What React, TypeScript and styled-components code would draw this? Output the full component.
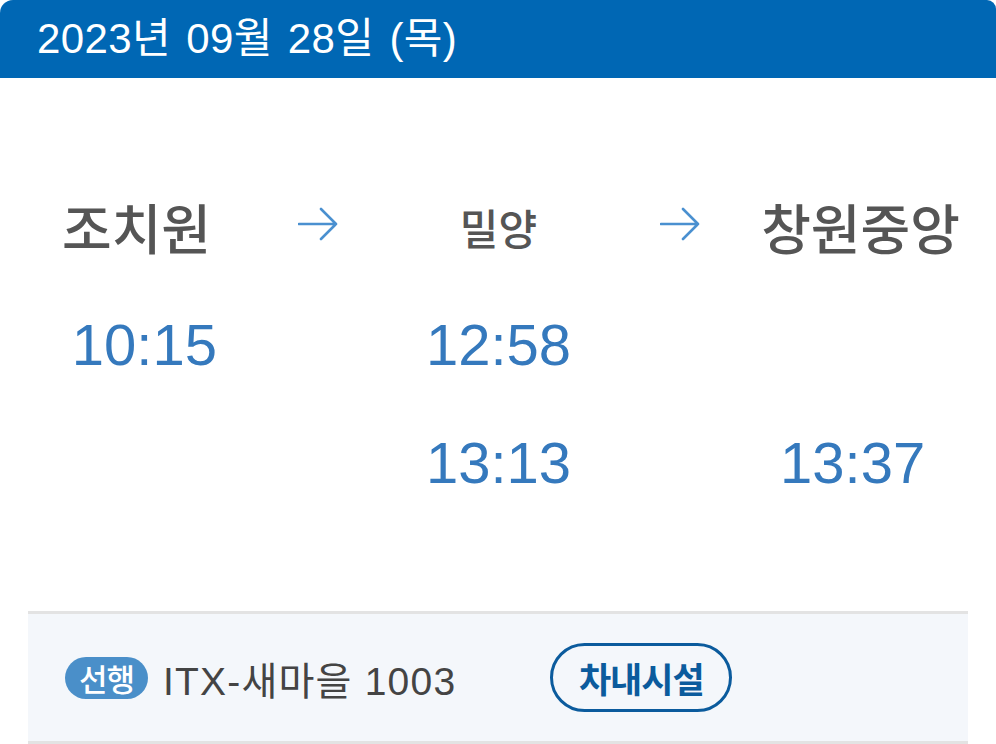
import React from 'react'
import styled, { createGlobalStyle } from 'styled-components'

const GlobalStyle = createGlobalStyle`
  html, body {
    margin: 0;
    padding: 0;
    background: #ffffff;
  }
  body {
    font-family: 'Liberation Sans', 'Noto Sans CJK KR', sans-serif;
  }
`

const Page = styled.div`
  width: 996px;
  height: 744px;
  overflow: hidden;
  background: #ffffff;
`

const DateBar = styled.div`
  height: 78px;
  display: flex;
  align-items: center;
  padding-left: 37px;
  background: #0067b4;
  border-radius: 13px 9px 0 0;
  color: #ffffff;
  font-size: 42px;
  line-height: 1;
  letter-spacing: 0.4px;
  word-spacing: 3px;
`

const Route = styled.div`
  display: grid;
  grid-template-columns: repeat(5, 181px);
  grid-auto-rows: 80px;
  row-gap: 38px;
  padding: 108px 0 0 46px;
  margin-bottom: 109px;
`

const Station = styled.div<{ small?: boolean }>`
  display: flex;
  align-items: center;
  justify-content: center;
  white-space: nowrap;
  font-family: 'Noto Sans CJK KR', 'Liberation Sans', sans-serif;
  font-size: ${({ small }) => (small ? '42px' : '54px')};
  font-weight: 500;
  color: #555555;
`

const ArrowCell = styled.div`
  display: flex;
  align-items: center;
  justify-content: center;
  padding-bottom: 4px;
`

const Time = styled.div<{ align: 'left' | 'center' | 'right' }>`
  display: flex;
  align-items: center;
  justify-content: ${({ align }) =>
    align === 'left' ? 'flex-start' : align === 'right' ? 'flex-end' : 'center'};
  padding: 0 10px;
  font-size: 58px;
  color: #3579bd;
  white-space: nowrap;
`

const Empty = styled.div``

const TrainPanel = styled.div`
  margin: 0 28px;
  height: 127px;
  display: flex;
  align-items: center;
  padding-left: 37px;
  background: #f4f7fb;
  border-top: 3px solid #e3e3e3;
  border-bottom: 3px solid #e3e3e3;
`

const Badge = styled.span`
  display: inline-flex;
  align-items: center;
  justify-content: center;
  width: 83px;
  height: 42px;
  border-radius: 21px;
  background: #4a8fc9;
  color: #ffffff;
  font-family: 'Noto Sans CJK KR', sans-serif;
  font-size: 31px;
  font-weight: 500;
  letter-spacing: -1px;
`

const TrainName = styled.span`
  margin-left: 15px;
  font-size: 39px;
  color: #444444;
  white-space: nowrap;
  letter-spacing: 1.2px;
`

const FacilityButton = styled.button`
  margin-left: 94px;
  width: 182px;
  height: 69px;
  border: 3px solid #0b5b9d;
  border-radius: 35px;
  background: transparent;
  color: #0b5b9d;
  font-family: 'Noto Sans CJK KR', sans-serif;
  font-size: 35px;
  font-weight: 700;
  letter-spacing: -1px;
  cursor: pointer;
  padding: 0;
`

function Arrow() {
  return (
    <svg width="40" height="34" viewBox="0 0 40 34" fill="none">
      <path
        d="M1 17H38M23 2L38 17L23 32"
        stroke="#4a90d0"
        strokeWidth="2.6"
        strokeLinecap="round"
        strokeLinejoin="round"
      />
    </svg>
  )
}

export default function App() {
  return (
    <Page>
      <GlobalStyle />
      <DateBar>2023년 09월 28일 (목)</DateBar>
      <Route>
        <Station>조치원</Station>
        <ArrowCell>
          <Arrow />
        </ArrowCell>
        <Station small>밀양</Station>
        <ArrowCell>
          <Arrow />
        </ArrowCell>
        <Station>창원중앙</Station>

        <Time align="right">10:15</Time>
        <Empty />
        <Time align="center">12:58</Time>
        <Empty />
        <Empty />

        <Empty />
        <Empty />
        <Time align="center">13:13</Time>
        <Empty />
        <Time align="left">13:37</Time>
      </Route>
      <TrainPanel>
        <Badge>선행</Badge>
        <TrainName>ITX-새마을 1003</TrainName>
        <FacilityButton>차내시설</FacilityButton>
      </TrainPanel>
    </Page>
  )
}
